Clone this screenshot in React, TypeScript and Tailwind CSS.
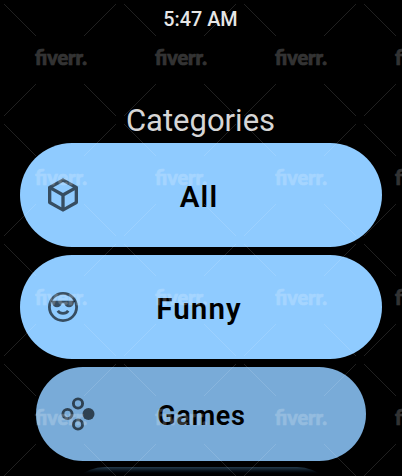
import type { ReactNode } from 'react';

function CubeIcon() {
  return (
    <svg viewBox="0 0 24 24" className="size-10 fill-current">
      <path d="M21,16.5C21,16.88 20.79,17.21 20.47,17.38L12.57,21.82C12.41,21.94 12.21,22 12,22C11.79,22 11.59,21.94 11.43,21.82L3.53,17.38C3.21,17.21 3,16.88 3,16.5V7.5C3,7.12 3.21,6.79 3.53,6.62L11.43,2.18C11.59,2.06 11.79,2 12,2C12.21,2 12.41,2.06 12.57,2.18L20.47,6.62C20.79,6.79 21,7.12 21,7.5V16.5M12,4.15L6.04,7.5L12,10.85L17.96,7.5L12,4.15M5,15.91L11,19.29V12.58L5,9.21V15.91M19,15.91V9.21L13,12.58V19.29L19,15.91Z" />
    </svg>
  );
}

function CoolFaceIcon() {
  return (
    <svg viewBox="0 0 40 40" className="size-10" fill="none" stroke="currentColor">
      <circle cx="20" cy="20" r="13.6" strokeWidth="2.8" />
      <path d="M7.6 13.8H32.4L31 15.2C30.6 18.4 28.6 20.3 26 20.3C23.3 20.3 21.6 18.4 21.2 16.2H18.8C18.4 18.4 16.7 20.3 14 20.3C11.4 20.3 9.4 18.4 9 15.2Z" fill="currentColor" stroke="none" />
      <path d="M14.8 23.8C17 27.2 23 27.2 25.2 23.8" strokeWidth="2.8" />
    </svg>
  );
}

function GamesIcon() {
  return (
    <svg viewBox="0 0 40 40" className="size-10" fill="none" stroke="currentColor" strokeWidth="2.9">
      <circle cx="20" cy="9.5" r="4.6" />
      <circle cx="9.5" cy="20" r="4.6" />
      <circle cx="20" cy="30.5" r="4.6" />
      <circle cx="30.5" cy="20" r="6" fill="currentColor" stroke="none" />
    </svg>
  );
}

function Category({ icon, label }: { icon: ReactNode; label: string }) {
  return (
    <button className="grid h-[104px] w-[362px] shrink-0 grid-cols-[56px_1fr_83px] items-center rounded-full bg-[#8fcbff] pl-[23px] text-[29.5px] leading-none font-semibold tracking-[1.1px] text-black">
      <span className="text-black/62">{icon}</span>
      <span className="pt-[5px] text-center">{label}</span>
    </button>
  );
}

function WatermarkTile() {
  return (
    <svg viewBox="0 0 120 120" className="size-[120px]">
      <path
        d="M4 4L36 36M116 4L84 36M4 116L36 84M116 116L84 84"
        stroke="white"
        strokeOpacity="0.16"
        strokeWidth="0.8"
        fill="none"
      />
      <text
        x="35"
        y="65"
        textLength="52"
        lengthAdjust="spacingAndGlyphs"
        strokeWidth="0.7"
        className="fill-white stroke-white font-[Lato,sans-serif] text-[20.5px] font-black opacity-20"
      >
        fiverr.
      </text>
    </svg>
  );
}

export default function App() {
  return (
    <div className="relative h-[476px] w-[402px] overflow-hidden bg-black font-[Roboto,sans-serif]">
      <main className="flex h-full flex-col items-center">
        <time className="mt-[10px] h-5 pr-px text-[19.8px] leading-5 font-medium text-[#e6e6e6]">5:47 AM</time>
        <h1 className="mt-[73px] mb-[4px] h-9 pr-px text-[31px] leading-9 text-[#d6d6d6]">Categories</h1>
        <div className="flex flex-col items-center gap-2">
          <Category icon={<CubeIcon />} label="All" />
          <Category icon={<CoolFaceIcon />} label="Funny" />
        </div>
        <button className="mt-[7.5px] grid h-[94.5px] w-[330px] shrink-0 grid-cols-[56px_1fr_77px] items-center rounded-full bg-[#79abd8] pl-[22px] text-[27px] leading-none font-semibold tracking-[0.7px] text-black">
          <span className="text-black/62"><GamesIcon /></span>
          <span className="pt-[6px] text-center">Games</span>
        </button>
        <div className="mt-[6px] h-[80px] w-[272px] shrink-0 rounded-full bg-linear-to-b from-[#243a4b] to-black to-[8px]" />
      </main>
      <div className="pointer-events-none absolute top-0 left-0 grid w-[480px] grid-cols-4">
        {Array.from({ length: 16 }, (_, i) => (
          <WatermarkTile key={i} />
        ))}
      </div>
    </div>
  );
}
